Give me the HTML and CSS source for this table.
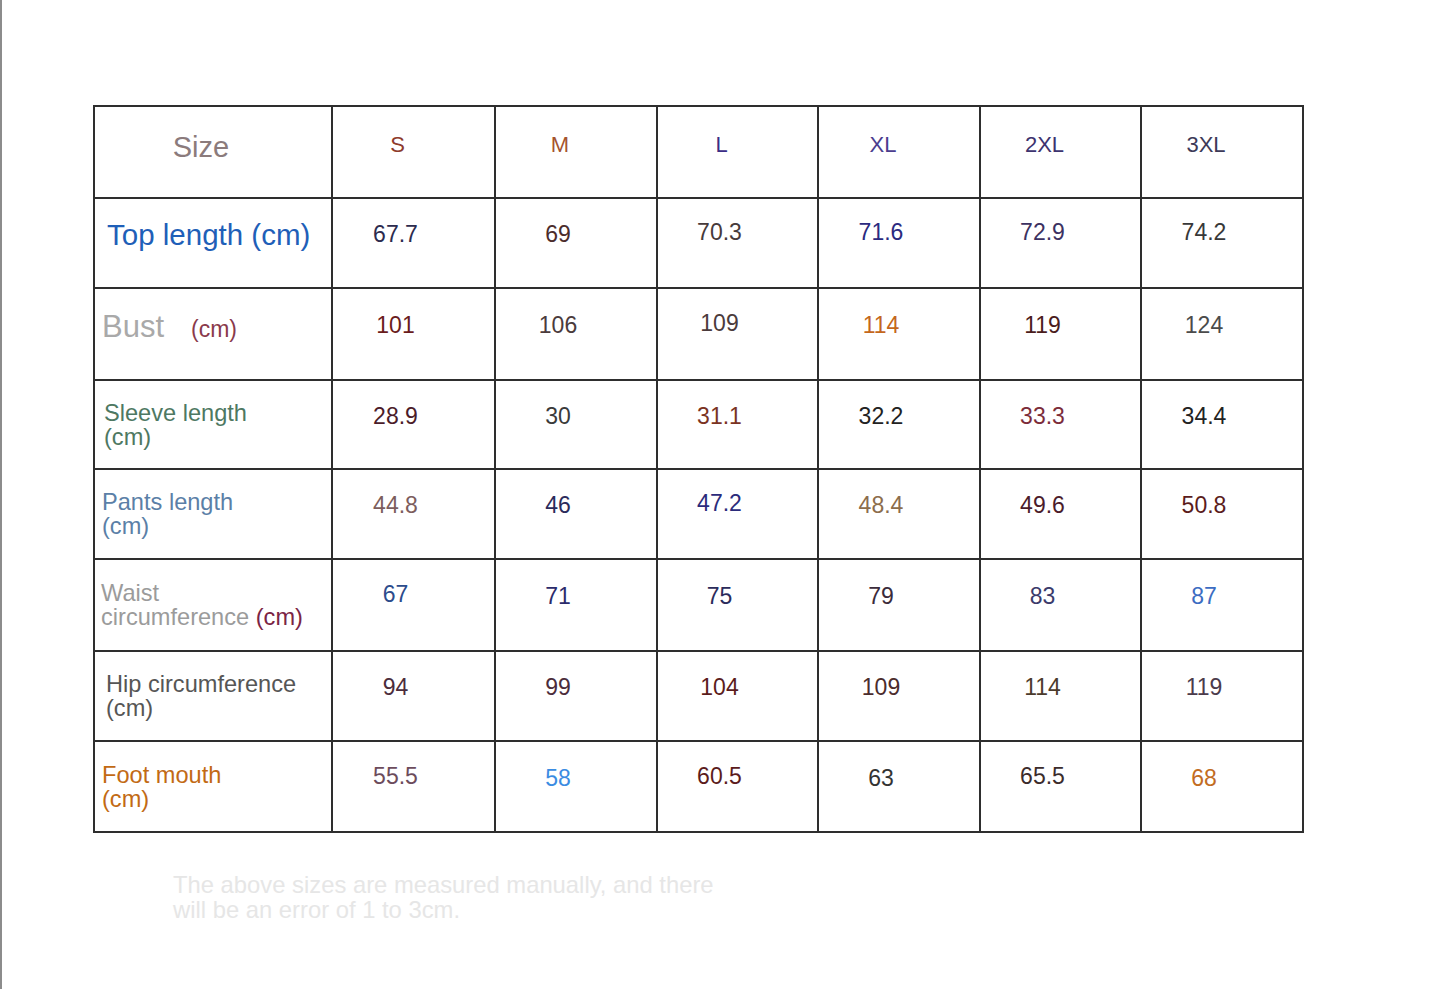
FILE: index.html
```html
<!DOCTYPE html>
<html lang="en">
<head>
<meta charset="utf-8">
<title>Size chart</title>
<link rel="stylesheet" href="styles.css">
</head>
<body>
<div class="page">
  <table class="chart">
    <colgroup>
      <col class="c-label"><col class="c-s"><col class="c-m"><col class="c-l"><col class="c-xl"><col class="c-2xl"><col class="c-3xl">
    </colgroup>
    <tr class="r-head">
      <td class="label size">Size</td>
      <td class="v hd" style="color:#8e3b2c">S</td>
      <td class="v hd" style="color:#a5532e">M</td>
      <td class="v hd" style="color:#3b2d86">L</td>
      <td class="v hd" style="color:#4b3d8e">XL</td>
      <td class="v hd" style="color:#3d336f">2XL</td>
      <td class="v hd" style="color:#3d3a58">3XL</td>
    </tr>
    <tr class="r-top">
      <td class="label top">Top length (cm)</td>
      <td class="v" style="color:#2c2b4e">67.7</td>
      <td class="v" style="color:#4b2c2c">69</td>
      <td class="v up" style="color:#473a3b">70.3</td>
      <td class="v up" style="color:#2b2a80">71.6</td>
      <td class="v up" style="color:#3c3161">72.9</td>
      <td class="v up" style="color:#383838">74.2</td>
    </tr>
    <tr class="r-bust">
      <td class="label bust"><span class="bust-word">Bust</span><span class="bust-cm">(cm)</span></td>
      <td class="v" style="color:#6a1c1c">101</td>
      <td class="v" style="color:#4b3b3c">106</td>
      <td class="v up" style="color:#4b3b3c">109</td>
      <td class="v" style="color:#c4671c">114</td>
      <td class="v" style="color:#4a1c1c">119</td>
      <td class="v" style="color:#4b4b4b">124</td>
    </tr>
    <tr class="r-sleeve">
      <td class="label two sleeve">Sleeve length<br>(cm)</td>
      <td class="v" style="color:#4b1c2a">28.9</td>
      <td class="v" style="color:#3a3a3a">30</td>
      <td class="v" style="color:#7a3222">31.1</td>
      <td class="v" style="color:#222222">32.2</td>
      <td class="v" style="color:#7c2c3a">33.3</td>
      <td class="v" style="color:#222222">34.4</td>
    </tr>
    <tr class="r-pants">
      <td class="label two pants">Pants length<br>(cm)</td>
      <td class="v" style="color:#7c5d5d">44.8</td>
      <td class="v" style="color:#2b2b5b">46</td>
      <td class="v up" style="color:#2b2b7b">47.2</td>
      <td class="v" style="color:#8c6d4c">48.4</td>
      <td class="v" style="color:#4b1c2b">49.6</td>
      <td class="v" style="color:#5b1c1c">50.8</td>
    </tr>
    <tr class="r-waist">
      <td class="label two waist">Waist<br>circumference <span class="waist-cm">(cm)</span></td>
      <td class="v up" style="color:#2c4c8c">67</td>
      <td class="v" style="color:#2b2b6b">71</td>
      <td class="v" style="color:#2b2b5b">75</td>
      <td class="v" style="color:#3b2b3b">79</td>
      <td class="v" style="color:#3b3b6b">83</td>
      <td class="v" style="color:#3c6cc2">87</td>
    </tr>
    <tr class="r-hip">
      <td class="label two hip">Hip circumference<br>(cm)</td>
      <td class="v" style="color:#4b2c3b">94</td>
      <td class="v" style="color:#4b2c3b">99</td>
      <td class="v" style="color:#5b1c1c">104</td>
      <td class="v" style="color:#4b2c2c">109</td>
      <td class="v" style="color:#4b3b2c">114</td>
      <td class="v" style="color:#4b3b4b">119</td>
    </tr>
    <tr class="r-foot">
      <td class="label two foot">Foot mouth<br>(cm)</td>
      <td class="v up" style="color:#6c4c5c">55.5</td>
      <td class="v" style="color:#3b8ce2">58</td>
      <td class="v up" style="color:#5b1c1c">60.5</td>
      <td class="v" style="color:#333333">63</td>
      <td class="v up" style="color:#3b2c2c">65.5</td>
      <td class="v" style="color:#c26c22">68</td>
    </tr>
  </table>
  <p class="note">The above sizes are measured manually, and there<br>will be an error of 1 to 3cm.</p>
</div>
</body>
</html>
```

FILE: styles.css
```css
html, body {
  margin: 0;
  padding: 0;
  background: #ffffff;
}

body {
  font-family: "Liberation Sans", Arial, "Helvetica", sans-serif;
}

.page {
  box-sizing: border-box;
  height: 989px;
  border-left: 2px solid #8c8c8c;
  padding: 105px 0 0 91px;
  overflow: hidden;
}

.chart {
  border-collapse: collapse;
  table-layout: fixed;
  width: 1209px;
}

.c-label { width: 238px; }
.c-s { width: 163px; }
.c-m { width: 162px; }
.c-l { width: 161px; }
.c-xl { width: 162px; }
.c-2xl { width: 161px; }
.c-3xl { width: 162px; }

.chart td {
  border: 2px solid #2e2e2e;
  padding: 0;
  vertical-align: middle;
}

.r-head { height: 92px; }
.r-top { height: 90px; }
.r-bust { height: 92px; }
.r-sleeve { height: 89px; }
.r-pants { height: 90px; }
.r-waist { height: 92px; }
.r-hip { height: 90px; }
.r-foot { height: 91px; }

.v {
  text-align: center;
  font-size: 23px;
  padding: 0 36px 17px 0 !important;
  white-space: nowrap;
}

.v.hd {
  font-size: 22px;
  padding-right: 32px !important;
  padding-bottom: 14px !important;
}

.v.up {
  padding-bottom: 21px !important;
}

.label {
  padding-left: 8px !important;
  white-space: nowrap;
}

.label.size {
  text-align: center;
  padding: 0 24px 10px 0 !important;
  font-size: 29px;
  color: #8b7b7c;
}

.label.top {
  padding-left: 12px !important;
  padding-bottom: 16px !important;
  font-size: 29.5px;
  color: #1f5fb8;
}

.label.bust {
  padding-left: 7px !important;
  padding-bottom: 14px !important;
}

.bust-word {
  font-size: 31px;
  color: #a9a9a9;
}

.bust-cm {
  font-size: 23px;
  color: #8a3a4c;
  margin-left: 27px;
}

.label.two {
  font-size: 23.6px;
  line-height: 24px;
}

.sleeve { color: #4e7862; padding-left: 9px !important; }
.pants { color: #5b7fa7; padding-left: 7px !important; }
.waist { color: #9b9b9b; padding-left: 6px !important; }
.waist-cm { color: #7b2444; }
.hip { color: #565656; padding-left: 11px !important; }
.foot { color: #c26a14; padding-left: 7px !important; }

.note {
  margin: 39px 0 0 80px;
  font-size: 23.8px;
  line-height: 25px;
  letter-spacing: 0;
  color: #e6e6e6;
}
```
